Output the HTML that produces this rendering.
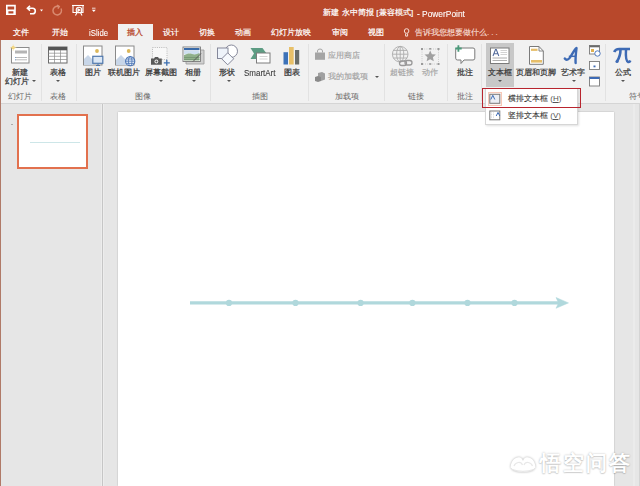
<!DOCTYPE html>
<html><head><meta charset="utf-8">
<style>
*{margin:0;padding:0;box-sizing:border-box}
html,body{width:640px;height:486px;overflow:hidden;background:#e6e6e6;font-family:"Liberation Sans",sans-serif;position:relative}
.a{position:absolute;white-space:nowrap}
svg{position:absolute;overflow:visible}
#title{left:0;top:0;width:640px;height:40px;background:#b8482b}
#ribbon{left:0;top:40px;width:640px;height:64px;background:#f1f1f1;border-bottom:1px solid #d5d5d5}
.tab{color:#fff;font-size:8px;top:28px;line-height:10px;-webkit-text-stroke:0.2px #fff}
.t{color:#3a3a3a;font-size:8px;line-height:10px;-webkit-text-stroke:0.25px #3a3a3a}
.r1{top:67.5px}.r2{top:77px}
.g{color:#666;font-size:8px;line-height:10px;top:92px}
.dis{color:#a2a2a2;-webkit-text-stroke:0.15px #a2a2a2}
.sep{position:absolute;background:#e2e2e2;width:1px;top:44px;height:57px}
.arr{position:absolute;width:0;height:0;border-left:2px solid transparent;border-right:2px solid transparent;border-top:2px solid #555}
#pline{left:102px;top:104px;width:1px;height:382px;background:#c6c6c6}
#slide{left:118px;top:112px;width:496px;height:374px;background:#fff;box-shadow:0 0 1.5px rgba(0,0,0,0.25)}
</style></head><body>
<div id="title" class="a"></div>
<div id="ribbon" class="a"></div>
<!--ICONSTART-->
<!-- active tab -->
<div class="a" style="left:118px;top:24px;width:35px;height:17px;background:#f1f1f1"></div>
<div class="a tab" style="left:13px">文件</div>
<div class="a tab" style="left:52px">开始</div>
<div class="a tab" style="left:88.5px;top:26.5px;font-size:9.5px;line-height:11px;-webkit-text-stroke:0.1px #fff;transform:scaleX(0.82);transform-origin:0 0">iSlide</div>
<div class="a tab" style="left:127px;color:#b8482b;-webkit-text-stroke:0.25px #b8482b">插入</div>
<div class="a tab" style="left:163px">设计</div>
<div class="a tab" style="left:199px">切换</div>
<div class="a tab" style="left:235px">动画</div>
<div class="a tab" style="left:271px">幻灯片放映</div>
<div class="a tab" style="left:332px">审阅</div>
<div class="a tab" style="left:368px">视图</div>
<div class="a tab" style="left:415px;color:#f6ddd4;-webkit-text-stroke:0.15px #f6ddd4">告诉我您想要做什么<span style="letter-spacing:2px">...</span></div>
<div class="a" style="left:323px;top:8px;color:#fff;font-size:8px;line-height:10px;-webkit-text-stroke:0.2px #fff;letter-spacing:0.1px">新建 永中简报 [兼容模式]</div>
<div class="a" style="left:416.5px;top:7.5px;color:#fff;font-size:9.5px;line-height:11px;-webkit-text-stroke:0.1px #fff;transform:scaleX(0.88);transform-origin:0 0">- PowerPoint</div>

<!-- ribbon labels -->
<div class="a t r1" style="left:12px">新建</div>
<div class="a t r2" style="left:5px">幻灯片</div>
<div class="arr" style="left:32px;top:80px"></div>
<div class="a g" style="left:8px">幻灯片</div>
<div class="sep" style="left:41px"></div>

<div class="a t r1" style="left:50px">表格</div>
<div class="arr" style="left:56px;top:80px"></div>
<div class="a g" style="left:50px">表格</div>
<div class="sep" style="left:76px"></div>

<div class="a t r1" style="left:85px">图片</div>
<div class="a t r1" style="left:108px">联机图片</div>
<div class="a t r1" style="left:145px">屏幕截图</div>
<div class="arr" style="left:159px;top:80px"></div>
<div class="a t r1" style="left:185px">相册</div>
<div class="arr" style="left:192px;top:80px"></div>
<div class="a g" style="left:135px">图像</div>
<div class="sep" style="left:210px"></div>

<div class="a t r1" style="left:219px">形状</div>
<div class="arr" style="left:227px;top:80px"></div>
<div class="a t r1" style="left:243.5px;top:66.5px;font-size:9.5px;line-height:11px;-webkit-text-stroke:0.1px #3a3a3a;transform:scaleX(0.84);transform-origin:0 0">SmartArt</div>
<div class="a t r1" style="left:284px">图表</div>
<div class="a g" style="left:252px">插图</div>
<div class="sep" style="left:308px"></div>

<div class="a t dis" style="left:328px;top:51px">应用商店</div>
<div class="a t dis" style="left:328px;top:72px">我的加载项</div>
<div class="arr" style="left:375px;top:76px"></div>
<div class="a g" style="left:335px">加载项</div>
<div class="sep" style="left:384px"></div>

<div class="a t r1 dis" style="left:390px">超链接</div>
<div class="a t r1 dis" style="left:422px">动作</div>
<div class="a g" style="left:408px">链接</div>
<div class="sep" style="left:447px"></div>

<div class="a t r1" style="left:457px">批注</div>
<div class="a g" style="left:457px">批注</div>
<div class="sep" style="left:481px"></div>

<div class="a" style="left:486px;top:43px;width:28px;height:44px;background:#c8c8c8"></div>
<div class="a t r1" style="left:488px">文本框</div>
<div class="arr" style="left:498px;top:80px"></div>
<div class="a t r1" style="left:516px">页眉和页脚</div>
<div class="a t r1" style="left:561px">艺术字</div>
<div class="arr" style="left:572px;top:80px"></div>
<div class="sep" style="left:605px"></div>
<div class="a t r1" style="left:615px">公式</div>
<div class="arr" style="left:621px;top:80px"></div>
<div class="a g" style="left:629px">符号</div>

<div id="pline" class="a"></div>
<div class="a" style="left:101px;top:104px;width:1px;height:382px;background:#ededed"></div>
<div class="a" style="left:103px;top:104px;width:1px;height:382px;background:#ededed"></div>
<div class="a" style="left:0;top:40px;width:1px;height:446px;background:#b07a68"></div>
<div id="slide" class="a"></div>
<div class="a" style="left:633px;top:104px;width:1.5px;height:382px;background:#ebebeb"></div>
<div class="a" style="left:639px;top:104px;width:1px;height:382px;background:#d4d4d4"></div>

<svg width="640" height="486" style="left:0;top:0" viewBox="0 0 640 486">
<!-- QAT -->
<path d="M6 4.8h9.8v10.3h-9.8z M7.6 6.4v3.2h6.6v-3.2z M8.4 11.2v2.4h5v-2.4z" fill="#fff" fill-rule="evenodd"/>
<g fill="none" stroke="#fff" stroke-width="1.6">
 <path d="M28 8.2h4.5a2.8 2.8 0 0 1 0 5.6h-2.5"/>
 <path d="M30 5.8l-2.6 2.4 2.6 2.4"/>
</g>
<path d="M40 9.5h3l-1.5 2z" fill="#fff"/>
<g fill="none" stroke="#d98a70" stroke-width="1.5"><path d="M61 8.5a4.3 4.3 0 1 1 -2.5 -2"/><path d="M57 5.2l2.2 1.3-1.3 2.2"/></g>
<g fill="none" stroke="#fff" stroke-width="1.1">
 <path d="M72 5.5h12"/><path d="M73 5.5v7h10v-7"/>
 <circle cx="79" cy="10" r="2.8"/><path d="M78 9v2.2l2-1.1z" fill="#fff"/>
 <path d="M75.5 15.5l1.5-3M82 15.5l-1.5-3"/>
</g>
<path d="M92 8.2h3.5" stroke="#fff" stroke-width="0.8"/><path d="M91.8 9.8h4l-2 2.3z" fill="#fff"/>
<!-- bulb -->
<g fill="none" stroke="#f6ddd4" stroke-width="1"><circle cx="406.6" cy="31" r="2.3"/><path d="M405.6 33.5v2.6h2v-2.6"/></g>

<!-- new slide -->
<rect x="11.5" y="47.5" width="17.5" height="15.5" fill="#fff" stroke="#8c8c8c" stroke-width="1"/>
<rect x="15" y="50.5" width="12" height="3" fill="#b4b4b4"/>
<path d="M15 57.5h12M15 59.8h12" stroke="#a8a8a8" stroke-width="0.8"/>
<circle cx="13.2" cy="47.6" r="1.7" fill="#f2cf6a"/>
<path d="M13.2 44.5v6.2M10.1 47.6h6.2" stroke="#f6dc90" stroke-width="0.7"/>
<path d="M15 57.5h0.8M15 59.8h0.8" stroke="#6a9ad0" stroke-width="0.9"/>
<!-- table -->
<rect x="48.5" y="47" width="18.5" height="16" fill="#fff" stroke="#6a6a6a" stroke-width="1"/>
<rect x="48.5" y="47" width="18.5" height="3.3" fill="#555"/>
<path d="M54.5 50v13M60.5 50v13M48.5 53.2h18.5M48.5 56.3h18.5M48.5 59.5h18.5" stroke="#8a8a8a" stroke-width="0.7"/>
<!-- picture -->
<rect x="83.5" y="46" width="18.5" height="19" fill="#fff" stroke="#8a8a8a" stroke-width="1"/>
<circle cx="97" cy="51" r="1.9" fill="#dbb75a"/>
<path d="M84 65v-6l4-4 5 5v5z" fill="#c8d6e8"/>
<rect x="92.8" y="56.3" width="10" height="7" fill="#dce8f6" stroke="#5078ad" stroke-width="1.2"/>
<path d="M96 65.5h4M98 63.5v2" stroke="#5078ad" stroke-width="1"/>
<!-- online picture -->
<rect x="115.5" y="46" width="18.5" height="19" fill="#fff" stroke="#8a8a8a" stroke-width="1"/>
<circle cx="128.7" cy="51" r="1.9" fill="#dbb75a"/>
<path d="M116 65v-5l5-5 6 6v4z" fill="#c8d6e8"/>
<circle cx="130.2" cy="61.2" r="4.6" fill="#e4edf8" stroke="#4a74b5" stroke-width="1.1"/>
<path d="M125.6 61.2h9.2M126.3 59h7.8M126.3 63.4h7.8" stroke="#4a74b5" stroke-width="0.8"/>
<ellipse cx="130.2" cy="61.2" rx="1.8" ry="4.6" fill="none" stroke="#4a74b5" stroke-width="0.8"/>
<!-- screenshot -->
<rect x="152.5" y="47.5" width="14.5" height="12" fill="#f8f8f8" stroke="#a0a0a0" stroke-width="0.7" stroke-dasharray="1 1.2"/>
<path d="M151 58.5h3l1-1.5h3l1 1.5h2.8v6.3h-10.8z" fill="#595959"/>
<circle cx="156.4" cy="61.5" r="1.9" fill="#f1f1f1"/><circle cx="156.4" cy="61.5" r="1" fill="#595959"/>
<path d="M163.8 62.8h6M166.8 59.8v6" stroke="#3b6db0" stroke-width="1.3"/>
<!-- album -->
<path d="M186 50h18v14h-18z" fill="#d0d0d0" stroke="#9a9a9a" stroke-width="0.8"/>
<rect x="183" y="47" width="17.5" height="14.5" fill="#fff" stroke="#7a7a7a" stroke-width="0.9"/>
<rect x="184" y="48" width="15.5" height="2.2" fill="#3a6aa8"/>
<path d="M184 51h15.5v4c-3 -2 -6 1 -8 -1s-5 1 -7.5 0z" fill="#cfe0f0"/>
<path d="M184 55c3 -1 5 -2 8 -1s5 0 7.5 -1v7.5h-15.5z" fill="#8fb08a"/>
<path d="M184 57.5h15.5M184 59.5h15.5" stroke="#6a8a6a" stroke-width="0.6"/>
<path d="M193 61.5l8 -8" stroke="#555" stroke-width="0.9"/>
<!-- shapes -->
<circle cx="231.3" cy="51.2" r="6.2" fill="#fff" stroke="#85889a" stroke-width="1"/>
<rect x="217.5" y="48" width="10.5" height="10.5" fill="#eef3fa" stroke="#85889a" stroke-width="1"/>
<path d="M227.7 52.8l6 6 -6 6 -6 -6z" fill="#f6f9fd" stroke="#85889a" stroke-width="1"/>
<!-- smartart -->
<path d="M250.5 48h12l4 5.5 -4 5.5h-12l3.5 -5.5z" fill="#5d9c83"/>
<rect x="256.5" y="53" width="13.5" height="10" fill="#fff" stroke="#7d7d7d" stroke-width="1"/>
<path d="M259.5 56.5h8M259.5 59h8" stroke="#b8b8b8" stroke-width="0.6"/>
<!-- chart -->
<rect x="283.5" y="52.2" width="4.5" height="12.3" fill="#3d72b8"/>
<rect x="289" y="47" width="4.7" height="17.5" fill="#e8c068"/>
<rect x="295" y="50" width="4.2" height="14.5" fill="#6a6e6a"/>
<!-- store -->
<path d="M315 52.5h10v7.3h-10z" fill="#a5a5a5"/>
<path d="M317.5 52.5v-1.5a2.5 2 0 0 1 5 0v1.5" fill="none" stroke="#a5a5a5" stroke-width="1"/>
<!-- addins -->
<path d="M318 73l4 -1 3 1.5v6l-4 1.5 -3 -1.5z" fill="#a0a0a0"/>
<path d="M315 77l3 -1 3 1v4l-3 1 -3 -1z" fill="#8a8a8a"/>
<!-- globe link -->
<g fill="none" stroke="#ababab" stroke-width="0.9">
<circle cx="400.2" cy="54.2" r="7.8"/>
<ellipse cx="400.2" cy="54.2" rx="3.6" ry="7.8"/>
<path d="M400.2 46.4v15.6M392.4 54.2h15.6M393.3 50.4h13.8M393.3 58h13.8"/>
<rect x="399.5" y="61" width="7" height="4.5" rx="2.2" stroke="#999" stroke-width="1.3"/>
<rect x="405" y="60.5" width="7" height="4.5" rx="2.2" stroke="#999" stroke-width="1.3"/>
</g>
<!-- action -->
<rect x="422" y="49" width="16.5" height="15" fill="none" stroke="#b8b8b8" stroke-width="0.7" stroke-dasharray="1 1.2"/>
<g fill="#9a9a9a"><rect x="421" y="48" width="2" height="2"/><rect x="437.5" y="48" width="2" height="2"/><rect x="421" y="63" width="2" height="2"/><rect x="437.5" y="63" width="2" height="2"/><rect x="429.2" y="48" width="2" height="1.6"/><rect x="429.2" y="63.2" width="2" height="1.6"/></g>
<path d="M430.2 50.5l1.7 3.7 4 0.4 -3 2.7 0.9 4 -3.6 -2 -3.6 2 0.9 -4 -3 -2.7 4 -0.4z" fill="#a0a0a0"/>
<!-- comment -->
<path d="M457.5 48h15.5a1.8 1.8 0 0 1 1.8 1.8v8.4a1.8 1.8 0 0 1 -1.8 1.8h-9l-3 3.5v-3.5h-3.5a1.8 1.8 0 0 1 -1.8 -1.8v-8.4a1.8 1.8 0 0 1 1.8 -1.8z" fill="#fff" stroke="#7a7a7a" stroke-width="1"/>
<path d="M455.2 48.5h6.5M458.4 45.2v6.5" stroke="#4a9a7a" stroke-width="1.8"/>
<!-- textbox -->
<rect x="490.5" y="48" width="18.5" height="15.5" fill="#fff" stroke="#7a7a7a" stroke-width="1"/>
<path d="M493 56l2.5 -6.5h0.8l2.5 6.5M494 53.8h3.6" fill="none" stroke="#52699a" stroke-width="1.05"/>
<path d="M500.5 50.5h6.5M500.5 52.5h6.5M500.5 54.5h6.5" stroke="#c8c8c8" stroke-width="0.8"/>
<path d="M492.5 58h14.5M492.5 60.5h14.5" stroke="#9a9a9a" stroke-width="0.8"/>
<!-- header footer -->
<path d="M529.5 46.5h9.5l4.3 4.5v13.3h-13.8z" fill="#fff" stroke="#7a7a7a" stroke-width="1"/>
<path d="M539 46.5v4.5h4.3" fill="none" stroke="#7a7a7a" stroke-width="0.9"/>
<rect x="531" y="48.7" width="6.5" height="2.2" fill="#e6be6a"/>
<rect x="531" y="60" width="11" height="2.6" fill="#e6be6a"/>
<!-- wordart -->
<path d="M564.8 58.5C566.5 61 569 59.5 571 56S574.8 49 576.5 48C576 52 575.3 58 575.6 63" fill="none" stroke="#3e6bb5" stroke-width="2.4" stroke-linecap="round" stroke-linejoin="round"/>
<path d="M568.8 56.3h7" stroke="#3e6bb5" stroke-width="1.5"/>
<!-- small icons -->
<rect x="589.5" y="45.5" width="10" height="8.5" fill="#fff" stroke="#7a7a7a" stroke-width="0.9"/>
<rect x="589.5" y="45.5" width="10" height="1.8" fill="#6a6a6a"/>
<rect x="591" y="49" width="3" height="3" fill="#e0b050"/>
<circle cx="597.5" cy="53.5" r="2.7" fill="#fff" stroke="#3e6bb5" stroke-width="0.9"/>
<rect x="589.5" y="61.5" width="10" height="8" fill="#fff" stroke="#7a7a7a" stroke-width="0.9"/>
<rect x="593.5" y="65.5" width="2" height="1.8" fill="#3e6bb5"/>
<rect x="589.5" y="77" width="10" height="9" fill="#fff" stroke="#7a7a7a" stroke-width="0.9"/>
<rect x="589.5" y="77" width="10" height="2" fill="#3e6bb5"/>
<!-- pi -->
<path d="M614.2 52c1 -2.5 2.5 -3 5 -3h10.8" fill="none" stroke="#3e6bb5" stroke-width="2.6"/>
<path d="M620.5 49.5c0 5 -1.2 8.5 -3.5 12" fill="none" stroke="#3e6bb5" stroke-width="2.6"/>
<circle cx="617" cy="61.5" r="1.6" fill="#3e6bb5"/>
<path d="M626 49.5c-0.3 5 -0.5 11.5 2.2 12.5 1.2 0.4 1.8 -0.5 2.2 -1.5" fill="none" stroke="#3e6bb5" stroke-width="2.5"/>
<!-- slide line -->
<g stroke="#b0d8dc" fill="#b0d8dc">
<path d="M190 302.9h370" stroke-width="3.3"/>
<path d="M556 297.5l12.5 5.4 -12.5 5.4 2.5 -5.4z" stroke-width="0.5"/>
</g>
<g fill="#b0d8dc"><circle cx="229" cy="302.9" r="3.1"/><circle cx="295.5" cy="302.9" r="3.1"/><circle cx="360.6" cy="302.9" r="3.1"/><circle cx="412.4" cy="302.9" r="3.1"/><circle cx="467.5" cy="302.9" r="3.1"/><circle cx="514.5" cy="302.9" r="3.1"/></g>
</svg>


<!-- thumbnail -->
<div class="a" style="left:17px;top:114px;width:71px;height:55px;border:2px solid #e2714e;background:#fff"></div>
<div class="a" style="left:30px;top:142px;width:50px;height:1px;background:#cde6e8"></div>
<div class="a" style="left:11px;top:124px;width:2px;height:1px;background:#aaa"></div>
<!-- menu -->
<div class="a" style="left:485px;top:88px;width:92.5px;height:36.5px;background:#fff;border:1px solid #d6d6d6;box-shadow:1px 1px 2px rgba(0,0,0,0.12)"></div>
<div class="a" style="left:488px;top:92px;width:14px;height:14px;border:1px solid #f6c8b8;background:#fdf3ef"></div>
<svg width="640" height="486" style="left:0;top:0">
<rect x="489.8" y="94.3" width="10" height="9" fill="#eceef4" stroke="#7a7a7a" stroke-width="1"/>
<path d="M490.8 99.5l2 -4.2 2 4.2" fill="none" stroke="#3e6bb5" stroke-width="1"/>
<rect x="489.8" y="111" width="10" height="8.8" fill="#fff" stroke="#7a7a7a" stroke-width="1"/>
<path d="M496.2 116l1.8 -3.6 1.8 3.6" fill="none" stroke="#3e6bb5" stroke-width="1"/>
<path d="M491.5 112.5v6M493.5 112.5v6" stroke="#b8b8b8" stroke-width="0.6" stroke-dasharray="0.8 0.8"/>
</svg>
<div class="a t" style="left:508px;top:94px;-webkit-text-stroke:0.1px #3a3a3a">横排文本框 <span style="-webkit-text-stroke:0;color:#555">(<u>H</u>)</span></div>
<div class="a t" style="left:508px;top:110.5px;-webkit-text-stroke:0.1px #3a3a3a">竖排文本框 <span style="-webkit-text-stroke:0;color:#555">(<u>V</u>)</span></div>
<div class="a" style="left:481.5px;top:87.7px;width:99.5px;height:20px;border:1.6px solid #b8252f"></div>
<!-- watermark -->
<div class="a" style="left:539.5px;top:451px;color:#fff;font-size:21px;font-weight:bold;line-height:24px;letter-spacing:2px;text-shadow:0 0 2px rgba(0,0,0,0.28),0 1px 1px rgba(0,0,0,0.12)">悟空问答</div>
<svg width="640" height="486" style="left:0;top:0;filter:drop-shadow(0 0 1.2px rgba(0,0,0,0.32))">
<path d="M510.5 467.5C511 460 516 456.5 519.5 457.3C521.5 457.8 522.8 459.5 523 461C523.2 459.5 524.5 457.8 526.5 457.3C530 456.5 535.3 460 535.5 467.5C530 473.5 516 473.5 510.5 467.5Z" fill="#fff"/>
<path d="M514 466c1.5 -4 7 -5 8.5 -1M524 465c1.5 -4 7 -3 8.5 1M512.5 469.5c6 2.5 15 2.5 21 0" fill="none" stroke="#e8e8e8" stroke-width="1.2"/>
</svg>
</body></html>
